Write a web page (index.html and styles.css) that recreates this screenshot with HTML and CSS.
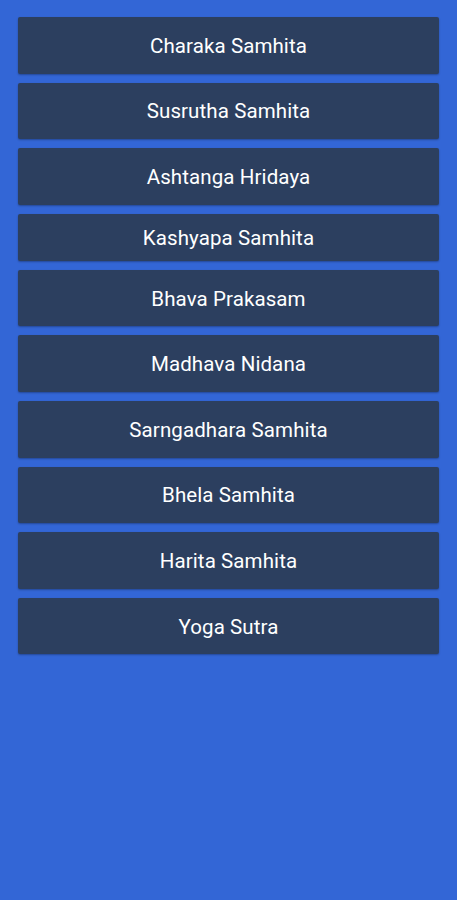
FILE: index.html
```html
<!DOCTYPE html>
<html>
<head>
<meta charset="utf-8">
<link rel="stylesheet" href="styles.css">
</head>
<body>
<div class="list">
  <button class="item">Charaka Samhita</button>
  <button class="item">Susrutha Samhita</button>
  <button class="item">Ashtanga Hridaya</button>
  <button class="item short">Kashyapa Samhita</button>
  <button class="item">Bhava Prakasam</button>
  <button class="item">Madhava Nidana</button>
  <button class="item">Sarngadhara Samhita</button>
  <button class="item">Bhela Samhita</button>
  <button class="item">Harita Samhita</button>
  <button class="item">Yoga Sutra</button>
</div>
</body>
</html>
```
FILE: styles.css
```css
html, body {
  margin: 0;
  padding: 0;
  height: 100%;
  background: #3366d6;
}
.list {
  display: flex;
  flex-direction: column;
  gap: 9px;
  padding: 17px 18px 0 18px;
}
.item {
  height: 56.6px;
  border: none;
  margin: 0;
  padding: 1px 0 0 0;
  background: #2c3f5f;
  color: #ffffff;
  font-family: Roboto, "Noto Sans", sans-serif;
  font-size: 20.5px;
  font-weight: 400;
  letter-spacing: 0.1px;
  border-radius: 2px;
  box-shadow: 0 1px 2px rgba(0,0,0,0.3);
}
.item.short {
  height: 47px;
}
```
